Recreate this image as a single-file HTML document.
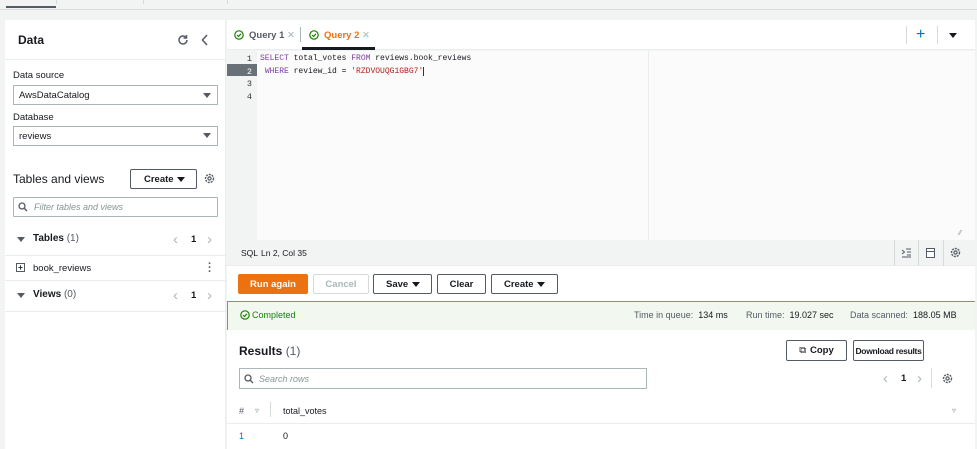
<!DOCTYPE html>
<html><head><style>
*{box-sizing:border-box;margin:0;padding:0}
body{width:977px;height:449px;overflow:hidden;background:#f2f3f3;font-family:"Liberation Sans",sans-serif;color:#16191f;font-size:10px;position:relative}
.a{position:absolute}
.btn{position:absolute;border:1px solid #545b64;border-radius:2px;background:#fff;font-weight:bold;font-size:9.5px;color:#545b64;display:flex;align-items:center;justify-content:center;white-space:nowrap}
.mono{font-family:"Liberation Mono",monospace;font-size:8px}
.sel{position:absolute;border:1px solid #aab7b8;background:#fff;font-size:9.5px;padding-left:5px;display:flex;align-items:center}
.tri{position:absolute;width:0;height:0;border-left:4px solid transparent;border-right:4px solid transparent;border-top:5px solid #545b64}
.chev{position:absolute;color:#aab7b8;font-size:15px;line-height:12px}
</style></head><body>
<div class="a" style="left:0;top:0;width:977px;height:10px;border-bottom:1px solid #d5dbdb;background:#f2f3f3"></div>
<div class="a" style="left:6px;top:6px;width:50px;height:2px;background:#545b64"></div>
<div class="a" style="left:56px;top:0;width:1px;height:4px;background:#d5dbdb"></div>
<div class="a" style="left:143px;top:0;width:1px;height:4px;background:#d5dbdb"></div>
<div class="a" style="left:227px;top:0;width:1px;height:4px;background:#d5dbdb"></div>

<!-- left panel -->
<div class="a" style="left:5px;top:20px;width:221px;height:429px;background:#fff;border-right:1px solid #eaeded"></div>
<div class="a" style="left:5px;top:20px;width:221px;height:40px;border-bottom:1px solid #eaeded"></div>
<div class="a" style="left:18px;top:33px;font-weight:bold;font-size:12px">Data</div>
<svg class="a" style="left:177px;top:34px" width="12" height="12" viewBox="0 0 12 12"><path d="M10 6a4 4 0 1 1-1.2-2.9" fill="none" stroke="#545b64" stroke-width="1.5"/><path d="M9.5 1v3h-3" fill="none" stroke="#545b64" stroke-width="1.5"/></svg>
<svg class="a" style="left:201px;top:34px" width="8" height="12" viewBox="0 0 8 12"><path d="M6 1L1.5 6 6 11" fill="none" stroke="#545b64" stroke-width="1.5"/></svg>
<div class="a" style="left:13px;top:70px;font-size:9.5px">Data source</div>
<div class="sel" style="left:13px;top:85px;width:205px;height:20px">AwsDataCatalog</div><div class="tri" style="left:203px;top:93px"></div>
<div class="a" style="left:13px;top:112px;font-size:9.5px">Database</div>
<div class="sel" style="left:13px;top:126px;width:205px;height:20px">reviews</div><div class="tri" style="left:203px;top:133px"></div>
<div class="a" style="left:13px;top:172px;font-size:12px;color:#16191f">Tables and views</div>
<div class="btn" style="left:130px;top:169px;width:67px;height:20px;color:#16191f;justify-content:flex-start;padding-left:13px">Create</div><div class="tri" style="left:177px;top:177px;border-top-color:#16191f"></div>
<svg class="a" style="left:204px;top:173px" width="11" height="11" viewBox="0 0 11 11"><circle cx="5.5" cy="5.5" r="4" fill="none" stroke="#545b64" stroke-width="1.4" stroke-dasharray="2 1"/><circle cx="5.5" cy="5.5" r="1.6" fill="none" stroke="#545b64" stroke-width="1.2"/></svg>
<div class="a" style="left:13px;top:197px;width:205px;height:20px;border:1px solid #aab7b8;border-radius:1px"></div>
<svg class="a" style="left:18px;top:202px" width="10" height="10" viewBox="0 0 10 10"><circle cx="4" cy="4" r="3" fill="none" stroke="#545b64" stroke-width="1.3"/><path d="M6.2 6.2L9 9" stroke="#545b64" stroke-width="1.4"/></svg>
<div class="a" style="left:34px;top:202px;font-style:italic;font-size:9px;color:#879596">Filter tables and views</div>
<div class="tri" style="left:17px;top:237px"></div>
<div class="a" style="left:33px;top:233px;font-weight:bold;font-size:10px">Tables <span style="font-weight:normal;color:#545b64">(1)</span></div>
<div class="chev" style="left:173px;top:234px">&#x2039;</div><div class="a" style="left:191px;top:234px;font-weight:bold;font-size:9.5px">1</div><div class="chev" style="left:207px;top:234px">&#x203A;</div>
<div class="a" style="left:5px;top:255px;width:221px;height:1px;background:#eaeded"></div>
<div class="a" style="left:16px;top:263px;width:9px;height:9px;border:1px solid #545b64;font-size:8px;line-height:7px;text-align:center;font-weight:bold">+</div>
<div class="a" style="left:33px;top:263px;font-size:9.5px;color:#16191f">book_reviews</div>
<div class="a" style="left:208px;top:262px;font-size:11px;line-height:4px;color:#545b64;font-weight:bold">·<br>·<br>·</div>
<div class="a" style="left:5px;top:280px;width:221px;height:1px;background:#eaeded"></div>
<div class="tri" style="left:17px;top:293px"></div>
<div class="a" style="left:33px;top:289px;font-weight:bold;font-size:10px">Views <span style="font-weight:normal;color:#545b64">(0)</span></div>
<div class="chev" style="left:173px;top:290px">&#x2039;</div><div class="a" style="left:191px;top:290px;font-weight:bold;font-size:9.5px">1</div><div class="chev" style="left:207px;top:290px">&#x203A;</div>
<div class="a" style="left:5px;top:311px;width:221px;height:1px;background:#eaeded"></div>

<!-- tabs -->
<div class="a" style="left:227px;top:20px;width:748px;height:30px;background:#fff;border-bottom:1px solid #eaeded"></div>
<svg class="a" style="left:234px;top:30px" width="10" height="10" viewBox="0 0 10 10"><circle cx="5" cy="5" r="4.2" fill="none" stroke="#1d8102" stroke-width="1.2"/><path d="M3 5l1.5 1.5L7 3.8" fill="none" stroke="#1d8102" stroke-width="1.2"/></svg>
<div class="a" style="left:249px;top:30px;font-size:9.5px;font-weight:bold;color:#545b64">Query 1 <span style="font-weight:normal;color:#aab7b8">✕</span></div>
<div class="a" style="left:300px;top:27px;width:1px;height:15px;background:#aab7b8"></div>
<svg class="a" style="left:309px;top:30px" width="10" height="10" viewBox="0 0 10 10"><circle cx="5" cy="5" r="4.2" fill="none" stroke="#1d8102" stroke-width="1.2"/><path d="M3 5l1.5 1.5L7 3.8" fill="none" stroke="#1d8102" stroke-width="1.2"/></svg>
<div class="a" style="left:324px;top:30px;font-size:9.5px;font-weight:bold;color:#ec7211">Query 2 <span style="font-weight:normal;color:#aab7b8">✕</span></div>
<div class="a" style="left:302px;top:47px;width:73px;height:3px;background:#16191f"></div>
<div class="a" style="left:906px;top:26px;width:1px;height:18px;background:#d5dbdb"></div>
<div class="a" style="left:916px;top:26px;font-size:16px;color:#0073bb">+</div>
<div class="a" style="left:937px;top:26px;width:1px;height:18px;background:#d5dbdb"></div>
<div class="tri" style="left:949px;top:33px;border-top-color:#16191f"></div>

<!-- editor -->
<div class="a" style="left:227px;top:51px;width:748px;height:189px;background:#fbfbfb"></div>
<div class="a" style="left:227px;top:51px;width:30px;height:189px;background:#f2f3f3"></div>
<div class="a" style="left:227px;top:64px;width:30px;height:12px;background:#687078"></div>
<div class="a" style="left:648px;top:51px;width:1px;height:189px;background:#eaeded"></div>
<div class="a mono" style="left:236px;top:53px;line-height:12.5px;color:#333;width:16px;text-align:right;font-size:8.5px">1<br><span style="color:#fff">2</span><br>3<br>4</div>
<div class="a mono" style="left:260px;top:53px;line-height:12.5px;color:#16191f;white-space:pre"><span style="color:#7a3e9d">SELECT</span> total_votes <span style="color:#7a3e9d">FROM</span> reviews.book_reviews
 <span style="color:#7a3e9d">WHERE</span> review_id = <span style="color:#b0241c">'RZDVOUQG1GBG7'</span><span style="border-left:1px solid #333"></span></div>
<div class="a" style="left:959px;top:230px;font-size:7px;color:#879596">⁄⁄</div>

<!-- status -->
<div class="a" style="left:227px;top:240px;width:748px;height:26px;background:#f2f3f3;border-bottom:1px solid #eaeded"></div>
<div class="a" style="left:241px;top:248px;font-size:8.5px">SQL</div>
<div class="a" style="left:261px;top:248px;font-size:8.5px">Ln 2, Col 35</div>
<div class="a" style="left:894px;top:240px;width:1px;height:26px;background:#d5dbdb"></div>
<div class="a" style="left:918px;top:240px;width:1px;height:26px;background:#d5dbdb"></div>
<div class="a" style="left:943px;top:240px;width:1px;height:26px;background:#d5dbdb"></div>
<svg class="a" style="left:901px;top:247px" width="11" height="11" viewBox="0 0 11 11"><path d="M1 3l2.5 2L1 7M5 2h5M6 5h4M6 8h4M1 10h9" fill="none" stroke="#545b64" stroke-width="1"/></svg>
<div class="a" style="left:926px;top:248px;width:9px;height:10px;border:1px solid #545b64;background:linear-gradient(#fff 2px,#545b64 2px,#545b64 3px,#fff 3px)"></div>
<svg class="a" style="left:950px;top:247px" width="11" height="11" viewBox="0 0 11 11"><circle cx="5.5" cy="5.5" r="4" fill="none" stroke="#545b64" stroke-width="1.4" stroke-dasharray="2 1"/><circle cx="5.5" cy="5.5" r="1.6" fill="none" stroke="#545b64" stroke-width="1.2"/></svg>

<!-- buttons -->
<div class="a" style="left:227px;top:266px;width:748px;height:35px;background:#fff"></div>
<div class="btn" style="left:238px;top:274px;width:70px;height:20px;background:#ec7211;border-color:#ec7211;color:#fff">Run again</div>
<div class="btn" style="left:313px;top:274px;width:56px;height:20px;border-color:#d5dbdb;color:#aab7b8">Cancel</div>
<div class="btn" style="left:373px;top:274px;width:59px;height:20px;justify-content:flex-start;padding-left:12px;color:#16191f">Save</div><div class="tri" style="left:412px;top:282px;border-top-color:#16191f"></div>
<div class="btn" style="left:437px;top:274px;width:49px;height:20px;color:#16191f">Clear</div>
<div class="btn" style="left:491px;top:274px;width:67px;height:20px;justify-content:flex-start;padding-left:12px;color:#16191f">Create</div><div class="tri" style="left:537px;top:282px;border-top-color:#16191f"></div>

<!-- completed -->
<div class="a" style="left:227px;top:301px;width:748px;height:29px;background:#f2f8f0;border-top:1px solid #6aaf35;border-left:1px solid #6aaf35"></div>
<svg class="a" style="left:240px;top:310px" width="10" height="10" viewBox="0 0 10 10"><circle cx="5" cy="5" r="4.2" fill="none" stroke="#1d8102" stroke-width="1.2"/><path d="M3 5l1.5 1.5L7 3.8" fill="none" stroke="#1d8102" stroke-width="1.2"/></svg>
<div class="a" style="left:252px;top:310px;font-size:9px;color:#1d8102">Completed</div>
<div class="a" style="left:634px;top:310px;font-size:9px;color:#545b64">Time in queue: <span style="color:#16191f">&nbsp;134 ms</span></div>
<div class="a" style="left:746px;top:310px;font-size:9px;color:#545b64">Run time: <span style="color:#16191f">&nbsp;19.027 sec</span></div>
<div class="a" style="left:850px;top:310px;font-size:9px;color:#545b64">Data scanned: <span style="color:#16191f">&nbsp;188.05 MB</span></div>

<!-- results -->
<div class="a" style="left:227px;top:330px;width:748px;height:119px;background:#fff"></div>
<div class="a" style="left:239px;top:344px;font-size:12px;font-weight:bold">Results <span style="font-weight:normal;color:#545b64">(1)</span></div>
<div class="btn" style="left:786px;top:340px;width:61px;height:21px;color:#16191f"><span style="font-weight:normal;margin-right:4px">⧉</span>Copy</div>
<div class="btn" style="left:853px;top:340px;width:71px;height:21px;color:#16191f;font-size:8.5px;letter-spacing:-0.3px">Download results</div>
<div class="a" style="left:239px;top:368px;width:408px;height:21px;border:1px solid #aab7b8"></div>
<svg class="a" style="left:244px;top:374px" width="10" height="10" viewBox="0 0 10 10"><circle cx="4" cy="4" r="3" fill="none" stroke="#545b64" stroke-width="1.3"/><path d="M6.2 6.2L9 9" stroke="#545b64" stroke-width="1.4"/></svg>
<div class="a" style="left:259px;top:374px;font-size:9px;font-style:italic;color:#879596">Search rows</div>
<div class="chev" style="left:883px;top:373px">&#x2039;</div><div class="a" style="left:901px;top:373px;font-weight:bold;font-size:9.5px">1</div><div class="chev" style="left:917px;top:373px">&#x203A;</div>
<div class="a" style="left:931px;top:368px;width:1px;height:20px;background:#d5dbdb"></div>
<svg class="a" style="left:942px;top:373px" width="11" height="11" viewBox="0 0 11 11"><circle cx="5.5" cy="5.5" r="4" fill="none" stroke="#545b64" stroke-width="1.4" stroke-dasharray="2 1"/><circle cx="5.5" cy="5.5" r="1.6" fill="none" stroke="#545b64" stroke-width="1.2"/></svg>
<div class="a" style="left:239px;top:406px;font-size:9px;color:#545b64">#</div>
<div class="a" style="left:255px;top:406px;font-size:8px;color:#879596">▿</div>
<div class="a" style="left:270px;top:402px;width:1px;height:15px;background:#d5dbdb"></div>
<div class="a" style="left:283px;top:406px;font-size:9px">total_votes</div>
<div class="a" style="left:952px;top:406px;font-size:8px;color:#879596">▿</div>
<div class="a" style="left:227px;top:423px;width:748px;height:1px;background:#eaeded"></div>
<div class="a" style="left:239px;top:431px;font-size:9px;color:#0073bb">1</div>
<div class="a" style="left:283px;top:431px;font-size:9px">0</div>
</body></html>
